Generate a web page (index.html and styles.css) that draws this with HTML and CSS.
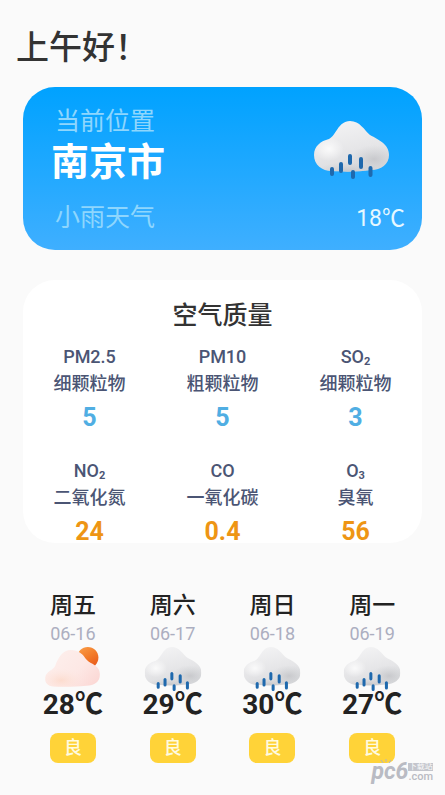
FILE: index.html
```html
<!DOCTYPE html>
<html lang="zh-CN">
<head>
<meta charset="utf-8">
<meta name="viewport" content="width=device-width, initial-scale=1">
<title>天气</title>
<link rel="stylesheet" href="styles.css">
</head>
<body>
<svg class="defs" aria-hidden="true">
  <defs>
    <linearGradient id="cloudFill" x1="0.3" y1="0" x2="0.6" y2="1">
      <stop offset="0" stop-color="#f3f3f4"/>
      <stop offset="0.5" stop-color="#e6e6e8"/>
      <stop offset="1" stop-color="#d6d7da"/>
    </linearGradient>
    <radialGradient id="cloudShade">
      <stop offset="0" stop-color="#b9babe" stop-opacity="0.6"/>
      <stop offset="1" stop-color="#c8cacd" stop-opacity="0"/>
    </radialGradient>
    <radialGradient id="cloudLight">
      <stop offset="0" stop-color="#ffffff" stop-opacity="0.8"/>
      <stop offset="1" stop-color="#ffffff" stop-opacity="0"/>
    </radialGradient>
    <linearGradient id="pinkFill" x1="0" y1="0.1" x2="1" y2="0.8">
      <stop offset="0" stop-color="#fdf0ed"/>
      <stop offset="0.6" stop-color="#fde8e5"/>
      <stop offset="1" stop-color="#fbd6d3"/>
    </linearGradient>
    <radialGradient id="peach">
      <stop offset="0" stop-color="#fcd6c4" stop-opacity="0.7"/>
      <stop offset="1" stop-color="#fde6df" stop-opacity="0"/>
    </radialGradient>
    <linearGradient id="sunFill" x1="0.2" y1="0" x2="0.8" y2="1">
      <stop offset="0" stop-color="#f99a45"/>
      <stop offset="0.5" stop-color="#f27a28"/>
      <stop offset="1" stop-color="#e8571a"/>
    </linearGradient>
    <clipPath id="cloudClip">
      <path d="M18 50C8 50 0 44 0 34C0 25 7 20 15 18C22 15 24 0 36 0C46 0 50 9 56 14C65 19 75 23 75 34C75 43 67 49 57 49C45 51 29 51 18 50Z"/>
    </clipPath>
    <clipPath id="pinkClip">
      <path d="M12 52C4 52 0 47 1 40C2 32 11 31 14 25C18 14 24 4 35 4C44 4 50 9 54 15C60 23 73 23 73 36C73 46 66 51 55 51C42 52 27 53 12 52Z"/>
    </clipPath>
    <symbol id="rain" viewBox="0 0 75 58">
      <g clip-path="url(#cloudClip)">
        <rect width="75" height="58" fill="url(#cloudFill)"/>
        <ellipse cx="60" cy="38" rx="24" ry="14" fill="url(#cloudShade)"/>
        <ellipse cx="34" cy="50" rx="32" ry="9" fill="url(#cloudShade)"/>
        <ellipse cx="15" cy="28" rx="15" ry="12" fill="url(#cloudLight)"/>
      </g>
      <path d="M18 48V53M27 43V50M36 35V42M47 38V46M39 51V56M56.500 47V54" fill="none" stroke="#1f69ad" stroke-width="4" stroke-linecap="round"/>
    </symbol>
    <symbol id="cloudy" viewBox="0 0 75 58">
      <circle cx="57" cy="14" r="14" fill="url(#sunFill)"/>
      <g clip-path="url(#pinkClip)">
        <rect width="75" height="58" fill="url(#pinkFill)"/>
        <ellipse cx="22" cy="44" rx="30" ry="16" fill="url(#peach)"/>
      </g>
    </symbol>
  </defs>
</svg>

<main class="page">
  <h1 class="greeting">上午好！</h1>

  <section class="hero">
    <div class="place">
      <p class="caption">当前位置</p>
      <h2 class="city">南京市</h2>
      <p class="caption">小雨天气</p>
    </div>
    <div class="now">
      <svg class="now-icon" role="img" aria-label="小雨"><use href="#rain"/></svg>
      <p class="now-temp">18℃</p>
    </div>
  </section>

  <section class="air">
    <h2 class="air-title">空气质量</h2>
    <ul class="air-grid">
      <li><span class="code">PM2.5</span><span class="name">细颗粒物</span><strong class="value">5</strong></li>
      <li><span class="code">PM10</span><span class="name">粗颗粒物</span><strong class="value">5</strong></li>
      <li><span class="code">SO<sub>2</sub></span><span class="name">细颗粒物</span><strong class="value">3</strong></li>
      <li><span class="code">NO<sub>2</sub></span><span class="name">二氧化氮</span><strong class="value high">24</strong></li>
      <li><span class="code">CO</span><span class="name">一氧化碳</span><strong class="value high">0.4</strong></li>
      <li><span class="code">O<sub>3</sub></span><span class="name">臭氧</span><strong class="value high">56</strong></li>
    </ul>
  </section>

  <ul class="forecast">
    <li><span class="day">周五</span><span class="date">06-16</span><svg class="day-icon" role="img" aria-label="多云"><use href="#cloudy"/></svg><span class="temp">28℃</span><span class="badge">良</span></li>
    <li><span class="day">周六</span><span class="date">06-17</span><svg class="day-icon" role="img" aria-label="雨"><use href="#rain"/></svg><span class="temp">29℃</span><span class="badge">良</span></li>
    <li><span class="day">周日</span><span class="date">06-18</span><svg class="day-icon" role="img" aria-label="雨"><use href="#rain"/></svg><span class="temp">30℃</span><span class="badge">良</span></li>
    <li><span class="day">周一</span><span class="date">06-19</span><svg class="day-icon" role="img" aria-label="雨"><use href="#rain"/></svg><span class="temp">27℃</span><span class="badge">良</span></li>
  </ul>
</main>

<div class="watermark">
  <svg class="mark-rays" viewBox="0 0 12 5" aria-hidden="true"><path d="M1 1L3 4M6 0V3M11 1L9 4" fill="none" stroke="#b4b6be" stroke-width="1"/></svg>
  <span class="mark-name">pc6</span>
  <span class="mark-side"><span class="mark-tag">下载站</span><span class="mark-com">.com</span></span>
</div>
</body>
</html>
```
FILE: styles.css
```css
* {
  box-sizing: border-box;
  margin: 0;
  padding: 0;
}

body {
  position: relative;
  min-height: 100vh;
  background: #fafafa;
  color: #222;
  font-family: Roboto, "Noto Sans CJK SC", sans-serif;
}

ul {
  list-style: none;
}

.defs {
  position: absolute;
  width: 0;
  height: 0;
}

.page {
  padding: 26px 23px 0;
}

.greeting {
  margin-left: -7px;
  color: #333;
  font-size: 33px;
  font-weight: 500;
  line-height: 44px;
}

.hero {
  display: flex;
  justify-content: space-between;
  margin-top: 17px;
  padding: 20px 17px 17px 28px;
  border-radius: 32px;
  background: linear-gradient(#00a2ff, #3fafff);
  color: #fff;
}

.caption {
  padding-left: 4px;
  color: #8ed6fd;
  font-size: 25px;
  font-weight: 400;
  line-height: 30px;
}

.city {
  margin-bottom: 16px;
  font-size: 38px;
  font-weight: 700;
  line-height: 50px;
}

.now {
  display: flex;
  flex-direction: column;
  align-items: flex-end;
  justify-content: space-between;
  padding-top: 14px;
}

.now-icon {
  width: 75px;
  height: 58px;
  margin-right: 16px;
}

.now-temp {
  color: #e6f8ff;
  font-size: 23px;
  line-height: 28px;
}

.air {
  margin-top: 30px;
  padding-top: 18px;
  border-radius: 32px;
  background: #fff;
}

.air-title {
  margin-bottom: 9px;
  color: #333;
  font-size: 25px;
  font-weight: 500;
  line-height: 36px;
  text-align: center;
}

.air-grid {
  display: grid;
  grid-template-columns: repeat(3, 1fr);
  row-gap: 28px;
}

.air-grid li,
.forecast li {
  display: flex;
  flex-direction: column;
  align-items: center;
}

.code,
.name {
  color: #4b5574;
  font-size: 18px;
  font-weight: 500;
  line-height: 27px;
}

.code sub {
  font-size: 11px;
  font-weight: 700;
  line-height: 0;
  vertical-align: -2px;
}

.value {
  margin-top: 10px;
  color: #50aee3;
  font-size: 25px;
  font-weight: 700;
  line-height: 22px;
}

.value.high {
  color: #ee9514;
}

.forecast {
  display: grid;
  grid-template-columns: repeat(4, 1fr);
  margin-top: 48px;
}

.day {
  font-size: 23px;
  font-weight: 500;
  line-height: 30px;
}

.date {
  color: #acaec0;
  font-size: 18px;
  line-height: 26px;
}

.day-icon {
  width: 58px;
  height: 44px;
}

.temp {
  font-size: 28px;
  font-weight: 700;
  line-height: 28px;
}

.badge {
  width: 46px;
  margin-top: 14px;
  border-radius: 8px;
  background: #ffd338;
  color: #fffbe0;
  font-size: 18px;
  font-weight: 500;
  line-height: 30px;
  text-align: center;
}

.watermark {
  position: absolute;
  right: 12px;
  bottom: 12px;
  display: flex;
  align-items: flex-end;
  color: #b9bbc3;
}

.mark-rays {
  position: absolute;
  top: -2px;
  left: 9px;
  width: 12px;
  height: 5px;
}

.mark-name {
  font-size: 23px;
  font-style: italic;
  font-weight: 700;
  line-height: 22px;
}

.mark-side {
  display: flex;
  flex-direction: column;
}

.mark-tag {
  background: #c3c5cc;
  color: #fafafa;
  font-size: 8px;
  line-height: 8px;
  text-align: center;
}

.mark-com {
  font-size: 11px;
  font-weight: 500;
  line-height: 12px;
}
```
